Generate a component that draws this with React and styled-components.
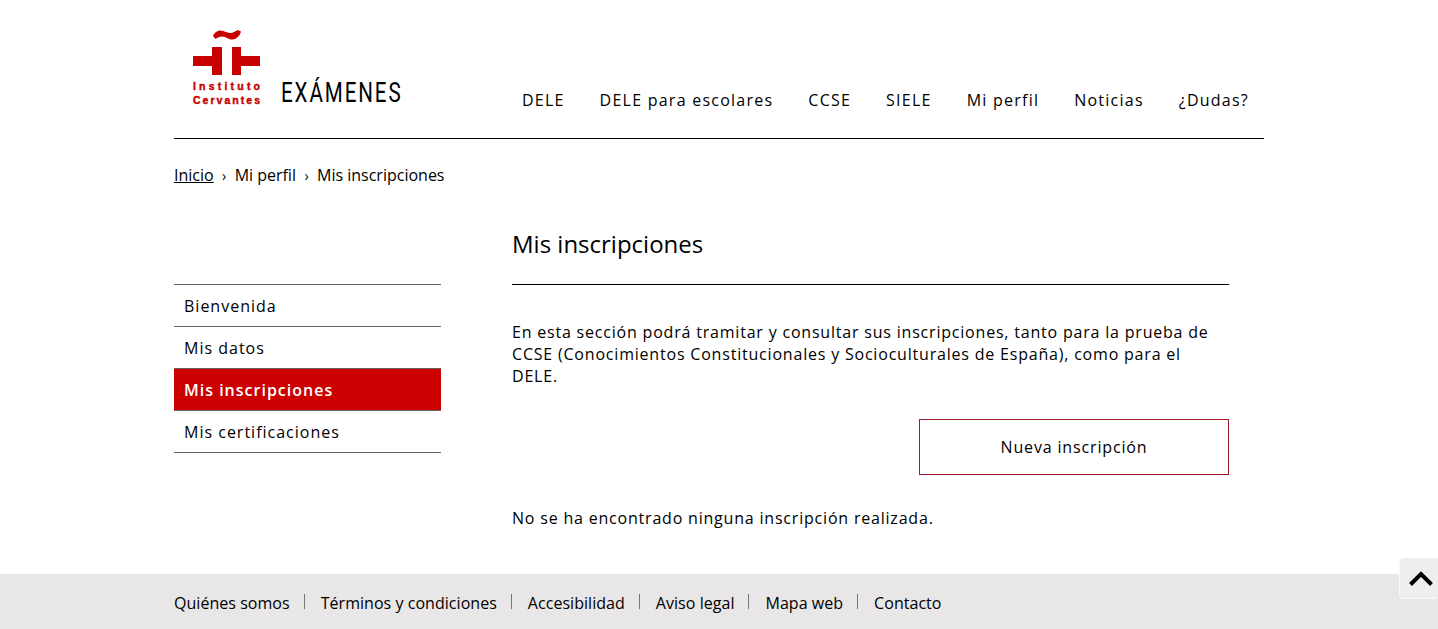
import React from 'react';
import styled, { createGlobalStyle } from 'styled-components';

const GlobalStyle = createGlobalStyle`
  html, body {
    margin: 0;
    padding: 0;
    background: #fff;
    color: #000;
    font-family: "Open Sans", "Liberation Sans", sans-serif;
    overflow: hidden;
  }
  * { box-sizing: border-box; }
`;

const Page = styled.div`
  width: 1438px;
  height: 629px;
  display: flex;
  flex-direction: column;
  position: relative;
  overflow: hidden;
`;

const Wrapper = styled.div`
  width: 1090px;
  margin-left: 174px;
`;

const Header = styled.header`
  height: 139px;
  border-bottom: 1px solid #000;
  display: flex;
  justify-content: space-between;
  align-items: flex-start;
  padding-left: 18px;
`;

const Brand = styled.a`
  display: flex;
  align-items: flex-end;
  gap: 19px;
  padding-top: 29px;
`;

const BrandTitle = styled.span`
  font-family: "Roboto", "Liberation Sans", sans-serif;
  font-size: 28px;
  line-height: 30px;
  letter-spacing: 2.6px;
  color: #000;
  display: inline-block;
  width: 120px;
  white-space: nowrap;
  transform: scaleX(0.735);
  transform-origin: left center;
  margin-bottom: -1px;
`;

const Nav = styled.nav`
  display: flex;
  gap: 35px;
  padding: 89px 15px 0 0;
`;

const NavLink = styled.a`
  font-size: 16px;
  line-height: 22px;
  letter-spacing: 1.24px;
  color: #000;
`;

const Breadcrumb = styled.div`
  display: flex;
  align-items: center;
  height: 22px;
  margin-top: 25px;
  font-size: 16px;
  letter-spacing: 0;
  color: #000;
`;

const Crumb = styled.a`
  text-decoration: ${p => (p.$link ? 'underline' : 'none')};
`;

const CrumbSep = styled.span`
  width: 21px;
  text-align: center;
  font-size: 14px;
`;

const Content = styled.div`
  display: flex;
  margin-top: 38px;
`;

const Sidebar = styled.ul`
  list-style: none;
  margin: 0;
  padding: 0;
  width: 267px;
  margin-top: 60px;
  border-top: 1px solid #666;
  align-self: flex-start;
`;

const SideItem = styled.li`
  height: 42px;
  padding-left: 10px;
  display: flex;
  align-items: center;
  border-bottom: 1px solid #666;
  font-size: 16px;
  letter-spacing: 1px;
  font-weight: ${p => (p.$active ? 600 : 400)};
  color: ${p => (p.$active ? '#fff' : '#000')};
  background: ${p => (p.$active ? '#cc0000' : 'transparent')};
`;

const Main = styled.main`
  width: 717px;
  margin-left: 71px;
`;

const Title = styled.h1`
  margin: 0;
  height: 61px;
  padding-top: 4px;
  font-size: 24px;
  line-height: 32px;
  font-weight: 400;
  border-bottom: 1px solid #000;
`;

const Paragraph = styled.p`
  margin: 36px 0 0;
  font-size: 16px;
  line-height: 22px;
  letter-spacing: 0.8px;
`;

const Actions = styled.div`
  display: flex;
  justify-content: flex-end;
  margin-top: 32px;
`;

const PrimaryButton = styled.button`
  width: 310px;
  height: 56px;
  background: #fff;
  border: 1px solid #9e1b2e;
  font-family: inherit;
  font-size: 16px;
  letter-spacing: 0.85px;
  color: #000;
`;

const EmptyText = styled.p`
  margin: 32px 0 0;
  font-size: 16px;
  line-height: 22px;
  letter-spacing: 0.8px;
`;

const Footer = styled.footer`
  position: absolute;
  left: 0;
  right: 0;
  bottom: 0;
  height: 55px;
  background: #e8e6e7;
`;

const FooterLinks = styled.div`
  display: flex;
  align-items: center;
  padding-top: 18px;
`;

const FooterLink = styled.a`
  font-size: 16px;
  line-height: 22px;
  letter-spacing: 0.04px;
  color: #000;
  padding: 0 15px 0 16px;
  position: relative;
  &:first-child { padding-left: 0; }
  &:not(:last-child)::after {
    content: '';
    position: absolute;
    right: 0;
    top: 2px;
    height: 15px;
    width: 1px;
    background: #777;
  }
`;

const ScrollTop = styled.button`
  position: absolute;
  right: 0;
  top: 558px;
  width: 38px;
  height: 40px;
  padding: 0 0 0 3px;
  border: none;
  border-radius: 4px 0 0 4px;
  background: #eeeeee;
  box-shadow: -1px 1px 0 #f7f7f7;
  display: flex;
  align-items: center;
  justify-content: center;
`;

const Logo = () => (
  <svg width="70" height="78" viewBox="0 0 70 78" aria-label="Instituto Cervantes">
    <g fill="#c70000">
      <path d="M21 7c1-3 4-5.500 7.500-5.500 3.500 0 6 2.500 9.500 2.500 3 0 5-1.500 8-3l3 1.500c-1 4-4.500 8-8.500 8-4 .2-6.500-3-10-3-3 0-5 1-7 2.500z" />
      <path d="M1 27h19v-9h10v28h-10v-9h-19z" />
      <path d="M40 18h9v9h19v10h-19v9h-9z" />
      <g fontFamily="Liberation Sans, sans-serif" fontWeight="700" fontSize="10.500" stroke="#c70000" strokeWidth="0.400">
        <text x="1" y="61" textLength="67" lengthAdjust="spacing">Instituto</text>
        <text x="1" y="75" textLength="67" lengthAdjust="spacing">Cervantes</text>
      </g>
    </g>
  </svg>
);

const ChevronUp = () => (
  <svg width="24" height="16" viewBox="0 0 24 16">
    <path d="M1.500 14.500L12 4l10.500 10.500" fill="none" stroke="#000" strokeWidth="4" />
  </svg>
);

const navItems = ['DELE', 'DELE para escolares', 'CCSE', 'SIELE', 'Mi perfil', 'Noticias', '¿Dudas?'];
const sideItems = ['Bienvenida', 'Mis datos', 'Mis inscripciones', 'Mis certificaciones'];
const footerItems = ['Quiénes somos', 'Términos y condiciones', 'Accesibilidad', 'Aviso legal', 'Mapa web', 'Contacto'];

const App = () => {
  return (
    <Page>
      <GlobalStyle />
      <Wrapper>
        <Header>
          <Brand>
            <Logo />
            <BrandTitle>EXÁMENES</BrandTitle>
          </Brand>
          <Nav>
            {navItems.map(item => (
              <NavLink key={item}>{item}</NavLink>
            ))}
          </Nav>
        </Header>

        <Breadcrumb>
          <Crumb $link>Inicio</Crumb>
          <CrumbSep>›</CrumbSep>
          <Crumb>Mi perfil</Crumb>
          <CrumbSep>›</CrumbSep>
          <Crumb>Mis inscripciones</Crumb>
        </Breadcrumb>

        <Content>
          <Sidebar>
            {sideItems.map(item => (
              <SideItem key={item} $active={item === 'Mis inscripciones'}>{item}</SideItem>
            ))}
          </Sidebar>
          <Main>
            <Title>Mis inscripciones</Title>
            <Paragraph>
              En esta sección podrá tramitar y consultar sus inscripciones, tanto para la prueba de
              CCSE (Conocimientos Constitucionales y Socioculturales de España), como para el DELE.
            </Paragraph>
            <Actions>
              <PrimaryButton>Nueva inscripción</PrimaryButton>
            </Actions>
            <EmptyText>No se ha encontrado ninguna inscripción realizada.</EmptyText>
          </Main>
        </Content>
      </Wrapper>

      <Footer>
        <Wrapper>
          <FooterLinks>
            {footerItems.map(item => (
              <FooterLink key={item}>{item}</FooterLink>
            ))}
          </FooterLinks>
        </Wrapper>
      </Footer>

      <ScrollTop aria-label="Subir">
        <ChevronUp />
      </ScrollTop>
    </Page>
  );
};

export default App;
